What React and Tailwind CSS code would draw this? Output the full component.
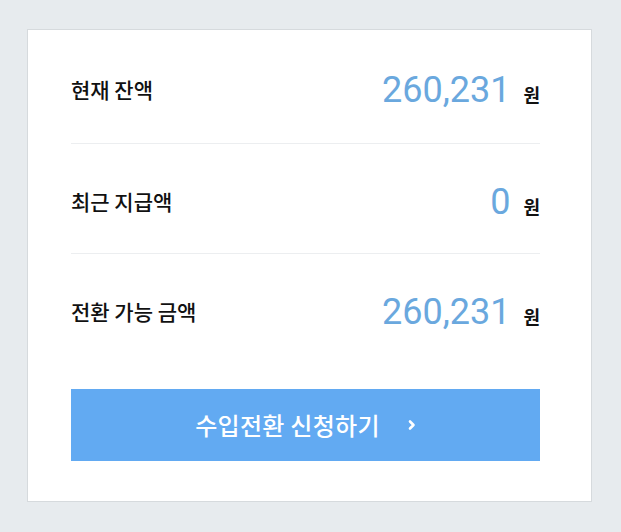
const ROWS = [
  { label: '현재 잔액', amount: '260,231', first: true },
  { label: '최근 지급액', amount: '0' },
  { label: '전환 가능 금액', amount: '260,231' },
];

const KR = { fontFamily: '"Noto Sans CJK KR", "Noto Sans", sans-serif' };
const NUM = { fontFamily: 'Roboto, "Noto Sans", sans-serif' };

function AmountRow({ label, amount, first }) {
  return (
    <div
      className={
        'flex items-center justify-between ' +
        (first ? 'h-[113px] pt-[7px]' : 'h-[109px] pt-[6px]')
      }
    >
      <span className="text-[21px] font-medium text-[#111]" style={KR}>
        {label}
      </span>
      <div className="flex items-baseline">
        <span className="text-[36px] leading-none text-[#6aa8de]" style={NUM}>
          {amount}
        </span>
        <span className="ml-[13px] text-[18px] font-bold text-[#111]" style={KR}>
          원
        </span>
      </div>
    </div>
  );
}

export default function App() {
  return (
    <div className="min-h-screen bg-[#e7ebee] pl-[27px] pt-[29px]">
      <div className="w-[565px] border border-[#d6dadd] bg-white pl-[43px] pr-[51px] pb-[40px]">
        {ROWS.map((r, i) => (
          <div key={r.label}>
            {i > 0 && <div className="h-px bg-[#eceef0]" />}
            <AmountRow {...r} />
          </div>
        ))}

        <button
          className="mt-[26px] flex h-[72px] w-full items-center justify-center bg-[#62aaf2] text-white"
          style={KR}
        >
          <span className="text-[24px] font-medium tracking-[0.3px]">수입전환 신청하기</span>
          <svg className="ml-[28px]" width="8" height="12" viewBox="0 0 8 12" fill="none">
            <path d="M2 2.5 L5.5 6 L2 9.5" stroke="white" strokeWidth="2.6" strokeLinecap="round" strokeLinejoin="round" />
          </svg>
        </button>
      </div>
    </div>
  );
}
